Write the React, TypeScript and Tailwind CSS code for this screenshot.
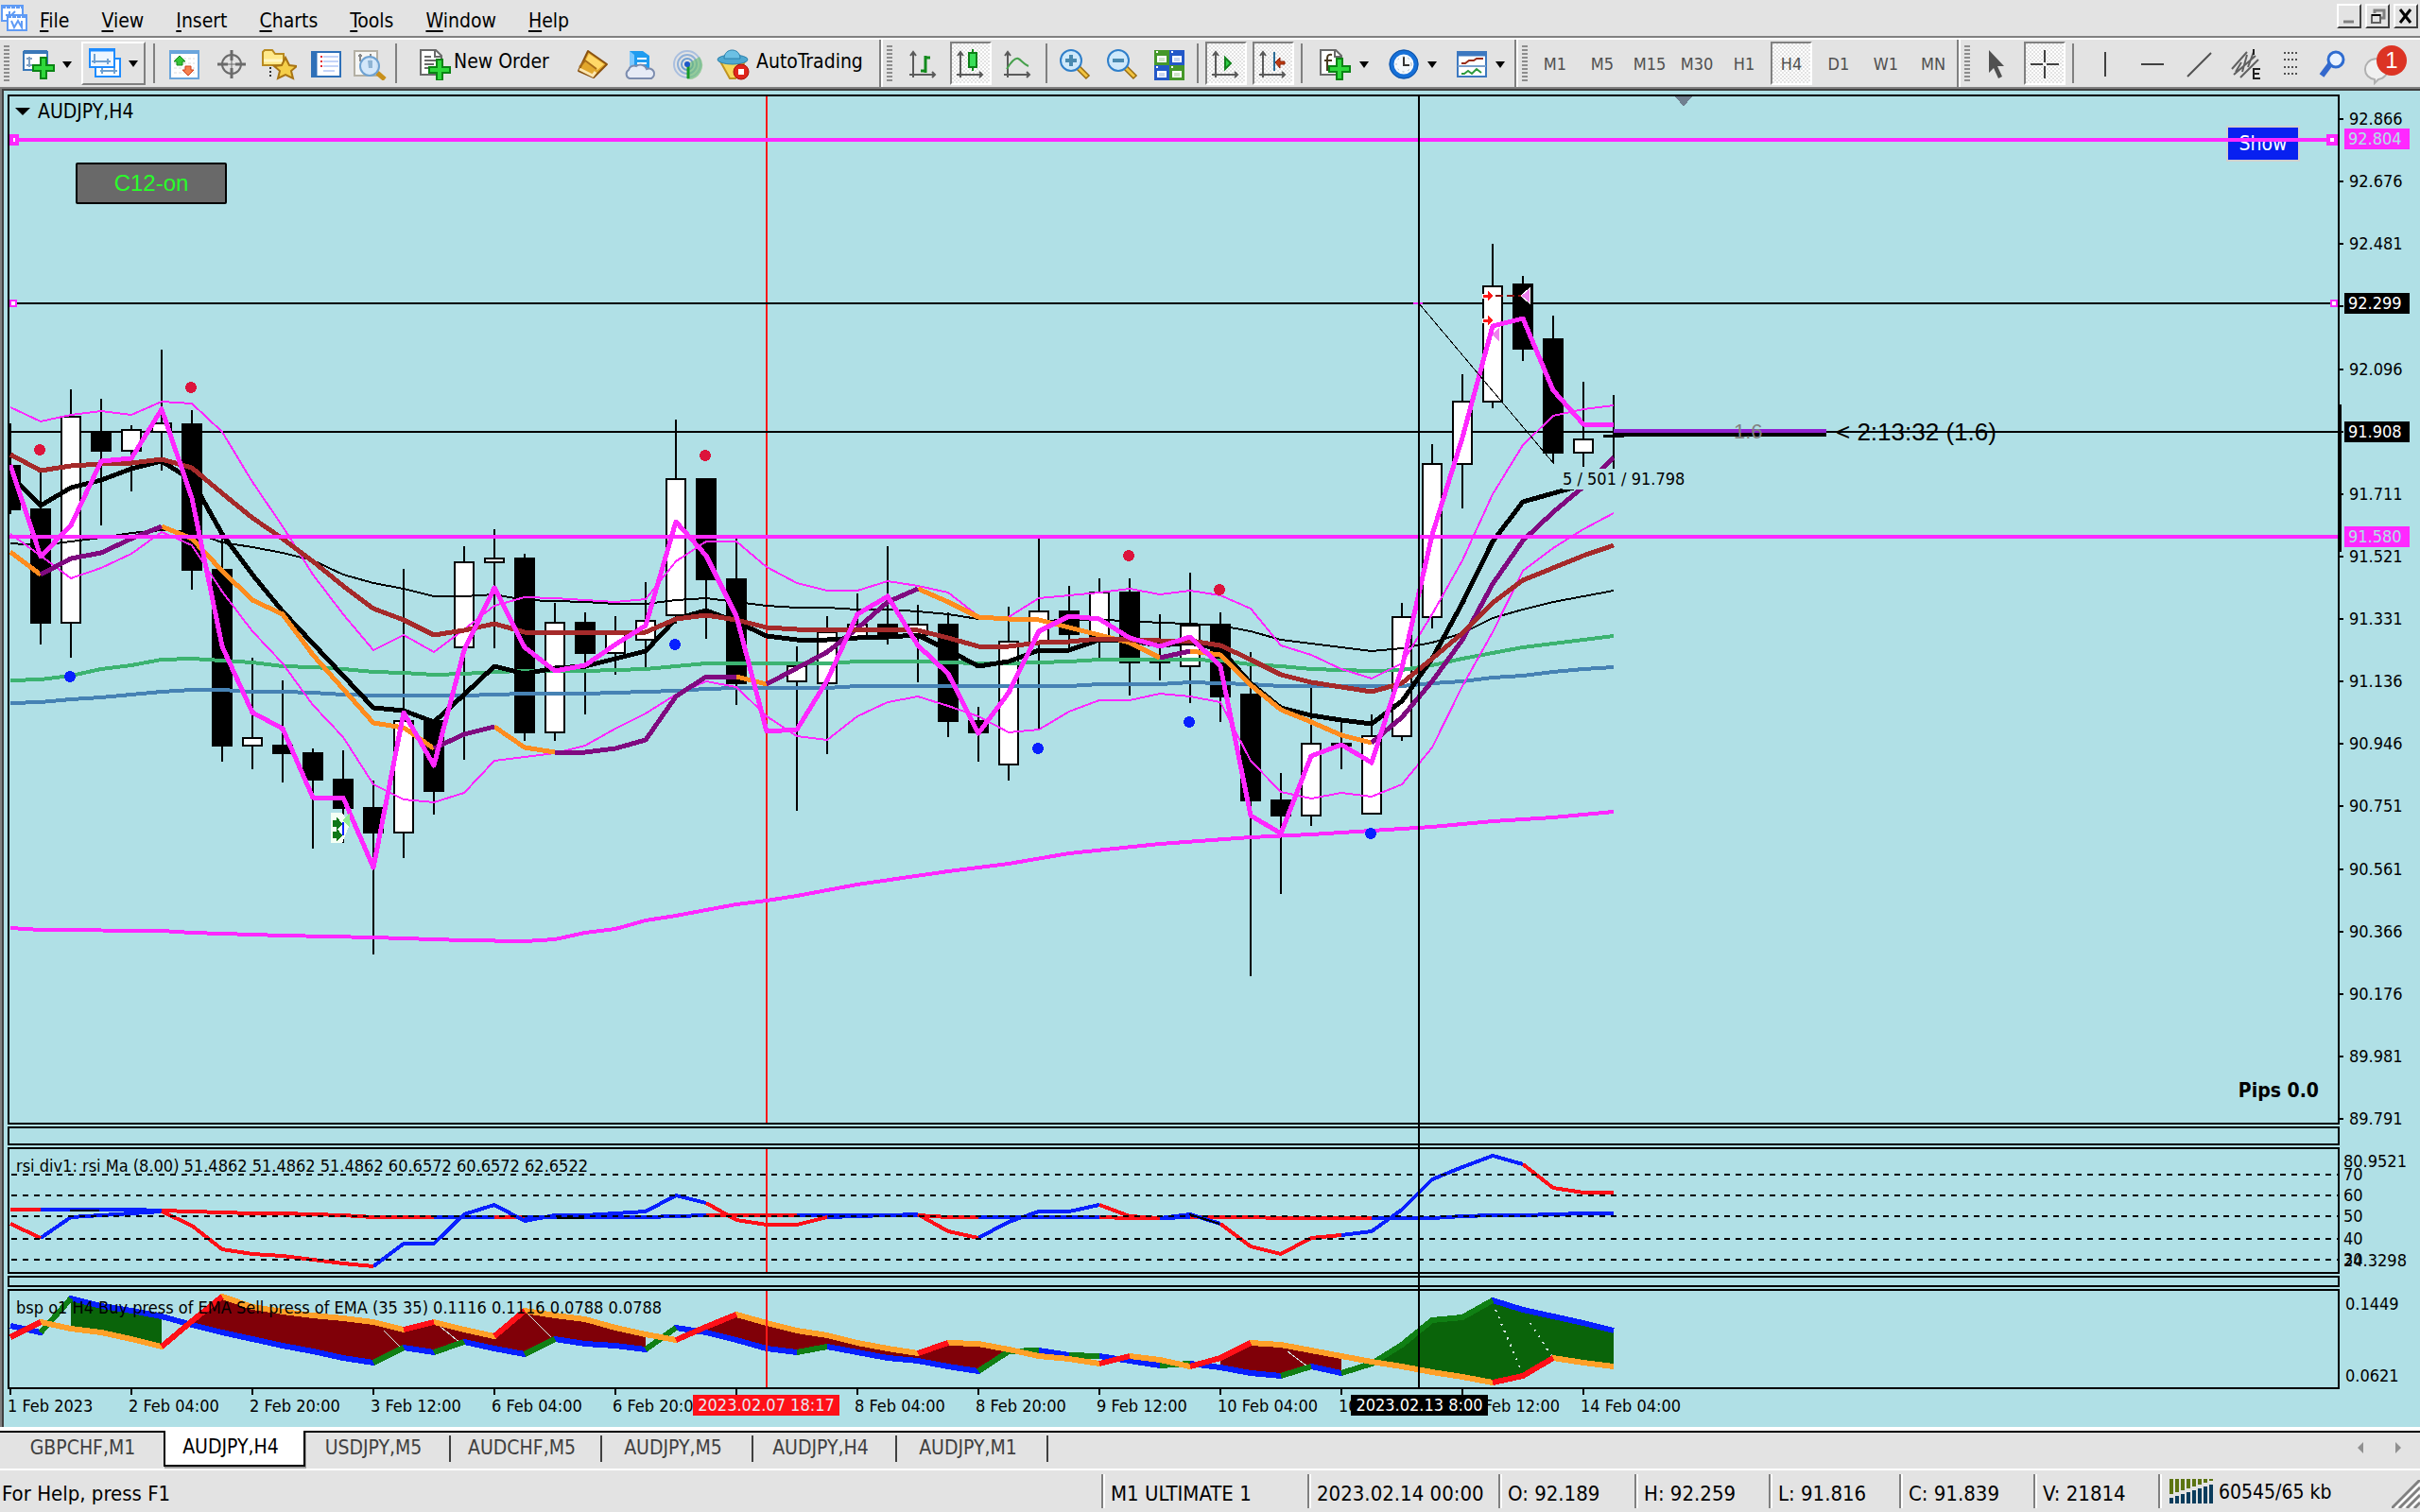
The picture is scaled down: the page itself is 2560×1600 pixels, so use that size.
import React from "react";

/* ---------- market data (chart pixel space, one bar every 32px) ---------- */

const X0 = 11;
const STEP = 32;
const bx = (i: number) => X0 + i * STEP;

type Bar = [number, number, number, number, number, 0 | 1];
// index, high, body top, body bottom, low, bullish
const BARS: Bar[] = [
  [0, 448, 492, 540, 544, 0], [1, 498, 538, 660, 682, 0], [2, 412, 441, 659, 696, 1], [3, 422, 456, 478, 556, 0],
  [4, 450, 455, 477, 520, 1], [5, 370, 448, 457, 498, 1], [6, 434, 448, 604, 624, 0], [7, 570, 602, 790, 806, 0],
  [8, 696, 781, 789, 814, 1], [9, 720, 788, 798, 828, 0], [10, 792, 796, 826, 898, 0], [11, 794, 824, 856, 892, 0],
  [12, 826, 854, 882, 1010, 0], [13, 602, 763, 881, 908, 1], [14, 762, 762, 838, 862, 0], [15, 578, 595, 685, 804, 1],
  [16, 560, 591, 595, 686, 1], [17, 586, 590, 776, 784, 0], [18, 638, 659, 775, 784, 1], [19, 648, 658, 692, 756, 0],
  [20, 652, 669, 691, 714, 1], [21, 616, 657, 677, 706, 1], [22, 444, 507, 651, 660, 1], [23, 506, 506, 614, 676, 0],
  [24, 570, 612, 724, 746, 0], [26, 684, 705, 721, 858, 1], [27, 652, 669, 723, 798, 1], [28, 628, 661, 675, 676, 1],
  [29, 578, 660, 673, 682, 0], [30, 640, 661, 672, 722, 1], [31, 648, 660, 764, 780, 0], [32, 748, 762, 776, 806, 0],
  [33, 642, 679, 809, 826, 1], [34, 570, 647, 680, 772, 1], [35, 620, 646, 672, 686, 0], [36, 612, 627, 673, 696, 1],
  [37, 612, 626, 702, 736, 0], [38, 650, 700, 702, 720, 0], [39, 606, 662, 705, 744, 1], [40, 648, 660, 738, 764, 0],
  [41, 690, 734, 848, 1033, 0], [42, 818, 846, 864, 946, 0], [43, 727, 787, 863, 874, 1], [44, 763, 786, 790, 814, 0],
  [45, 756, 779, 861, 861, 1], [46, 638, 653, 779, 784, 1], [47, 470, 491, 653, 665, 1], [48, 396, 425, 491, 538, 1],
  [49, 258, 303, 425, 432, 1], [50, 292, 300, 370, 382, 0], [51, 334, 358, 480, 490, 0], [52, 404, 465, 479, 494, 1],
  [53, 418, 460, 463, 500, 0],
];

const FAST = [492, 589, 556, 488, 485, 433, 527, 684, 754, 771, 844, 844, 918, 754, 810, 688, 622, 685, 710, 704, 682, 662, 552, 588, 652, 774, 772, 720, 650, 631, 683, 713, 776, 733, 668, 652, 655, 675, 684, 674, 705, 863, 882, 800, 788, 807, 707, 566, 463, 345, 337, 413, 449, 450];
const BAND_UP = [431, 446, 439, 435, 439, 425, 427, 457, 510, 557, 608, 650, 688, 672, 690, 666, 641, 632, 633, 635, 637, 634, 594, 573, 573, 600, 617, 625, 625, 615, 620, 627, 652, 653, 633, 630, 627, 623, 629, 625, 630, 644, 683, 693, 708, 718, 702, 650, 593, 523, 471, 440, 433, 429];
const BAND_LOW = [565, 588, 612, 601, 586, 563, 577, 626, 668, 702, 746, 780, 830, 846, 849, 839, 805, 801, 797, 789, 771, 755, 735, 721, 727, 758, 779, 783, 758, 743, 737, 747, 758, 775, 772, 753, 741, 741, 734, 737, 743, 805, 838, 845, 839, 843, 830, 791, 726, 669, 604, 580, 560, 543];
const SLOW_BLACK = [575, 577, 573, 569, 564, 561, 563, 574, 579, 585, 593, 608, 617, 623, 631, 631, 629, 635, 636, 637, 639, 639, 635, 633, 637, 641, 643, 643, 645, 645, 647, 650, 655, 656, 657, 656, 656, 657, 659, 660, 662, 668, 677, 681, 685, 689, 686, 680, 670, 654, 645, 637, 631, 625];
const MID_BLACK = [503, 535, 516, 508, 496, 488, 508, 565, 608, 647, 681, 715, 749, 752, 764, 735, 705, 713, 707, 705, 697, 689, 655, 646, 658, 673, 677, 677, 675, 674, 672, 688, 705, 700, 688, 688, 677, 678, 683, 680, 687, 723, 749, 757, 762, 766, 742, 697, 638, 573, 531, 522, 513, 505];
const TREND = [584, 608, 591, 585, 570, 557, 570, 604, 635, 650, 693, 729, 765, 770, 792, 777, 769, 791, 796, 796, 792, 783, 737, 716, 716, 724, 707, 690, 665, 637, 623, 637, 653, 655, 656, 664, 672, 680, 696, 689, 693, 725, 751, 764, 778, 786, 759, 721, 677, 618, 572, 542, 515, 484];
const TREND_UP: [number, number][] = [[1, 5], [14, 16], [18, 24], [25, 30], [38, 39], [45, 53]];
const TREND_DOWN: [number, number][] = [[0, 1], [5, 14], [16, 18], [24, 25], [30, 38], [39, 45]];
const BROWN = [481, 498, 493, 491, 490, 486, 495, 522, 548, 570, 594, 620, 644, 656, 672, 667, 660, 669, 669, 669, 669, 669, 655, 651, 656, 664, 666, 666, 666, 666, 667, 675, 684, 684, 680, 679, 676, 677, 678, 678, 683, 698, 714, 722, 727, 732, 723, 697, 670, 638, 614, 601, 588, 577];
const GREEN = [720, 719, 715, 708, 704, 698, 697, 699, 701, 705, 706, 708, 711, 712, 714, 713, 711, 710, 710, 710, 709, 708, 705, 702, 702, 702, 702, 702, 700, 700, 700, 701, 702, 702, 701, 700, 698, 698, 698, 698, 699, 703, 705, 708, 709, 710, 709, 704, 697, 691, 685, 681, 677, 673];
const BLUE = [744, 743, 740, 738, 735, 732, 730, 730, 732, 732, 733, 735, 736, 736, 736, 736, 735, 734, 734, 734, 733, 732, 731, 729, 728, 728, 728, 728, 726, 726, 726, 726, 726, 726, 726, 726, 724, 724, 724, 722, 723, 724, 726, 726, 726, 726, 726, 723, 721, 717, 715, 711, 708, 706];
const LONG: [number, number][] = [[0, 982], [1, 984], [5, 985], [6, 987], [9, 990], [12, 992], [15, 995], [17, 996], [18, 994], [19, 987], [20, 983], [21, 974], [22, 969], [23, 963], [24, 957], [25, 953], [26, 948], [28, 936], [31, 922], [33, 914], [35, 903], [38, 893], [41, 886], [43, 883], [45, 879], [47, 875], [49, 869], [51, 865], [53, 859]];

const SELL_DOTS: [number, number][] = [[1, 476], [6, 410], [23, 482], [37, 588], [40, 624]];
const BUY_DOTS: [number, number][] = [[2, 716], [22, 682], [34, 792], [39, 764], [45, 882]];

const RSI = [1295, 1310, 1288, 1286, 1284, 1282, 1297, 1322, 1327, 1329, 1333, 1337, 1340, 1316, 1316, 1285, 1275, 1292, 1286, 1286, 1284, 1282, 1265, 1273, 1291, 1296, 1296, 1288, 1287, 1286, 1285, 1303, 1310, 1293, 1282, 1282, 1275, 1287, 1289, 1285, 1295, 1319, 1327, 1310, 1307, 1303, 1280, 1248, 1235, 1223, 1232, 1257, 1262, 1262];
const RSI_UP: [number, number][] = [[1, 5], [12, 23], [27, 30], [32, 36], [38, 40], [44, 50]];
const RSI_DOWN: [number, number][] = [[0, 1], [5, 12], [23, 27], [30, 32], [36, 38], [40, 44], [50, 53]];
const SIG = [1280, 1280, 1280, 1280, 1280, 1281, 1282, 1283, 1284, 1284, 1285, 1286, 1288, 1288, 1288, 1288, 1288, 1288, 1288, 1288, 1288, 1288, 1287, 1286, 1286, 1286, 1286, 1286, 1286, 1286, 1286, 1288, 1288, 1288, 1288, 1288, 1288, 1289, 1289, 1288, 1288, 1288, 1289, 1289, 1289, 1289, 1289, 1289, 1287, 1286, 1286, 1285, 1284, 1284];
const SIG_UP: [number, number][] = [[1, 5], [14, 16], [17, 23], [26, 30], [32, 36], [38, 39], [45, 53]];
const SIG_DOWN: [number, number][] = [[0, 1], [5, 14], [16, 17], [23, 26], [30, 32], [36, 38], [39, 45]];

const BUYP = [1403, 1410, 1374, 1382, 1387, 1393, 1402, 1410, 1417, 1424, 1430, 1437, 1442, 1426, 1431, 1420, 1427, 1433, 1417, 1422, 1424, 1428, 1405, 1410, 1418, 1427, 1431, 1425, 1431, 1437, 1440, 1446, 1451, 1430, 1429, 1434, 1435, 1440, 1445, 1443, 1447, 1453, 1456, 1446, 1453, 1443, 1423, 1397, 1394, 1376, 1386, 1393, 1400, 1408];
const BUYP_UP: [number, number][] = [[1, 2], [12, 13], [14, 15], [17, 18], [21, 22], [26, 27], [32, 34], [35, 36], [38, 39], [42, 43], [44, 49]];
const SELLP = [1415, 1399, 1406, 1410, 1417, 1425, 1398, 1372, 1383, 1388, 1392, 1395, 1399, 1407, 1399, 1407, 1414, 1387, 1392, 1396, 1405, 1412, 1418, 1404, 1391, 1400, 1408, 1413, 1421, 1427, 1432, 1421, 1422, 1428, 1435, 1438, 1443, 1435, 1439, 1446, 1437, 1421, 1423, 1429, 1435, 1441, 1446, 1452, 1457, 1463, 1456, 1437, 1442, 1446];
const SELLP_UP: [number, number][] = [[0, 1], [5, 7], [13, 14], [16, 17], [22, 24], [30, 31], [36, 37], [39, 41], [49, 51]];

const PRICES = ["92.866", "92.676", "92.481", "92.299", "92.096", "91.908", "91.711", "91.521", "91.331", "91.136", "90.946", "90.751", "90.561", "90.366", "90.176", "89.981", "89.791"];
// the seventh slot is fully covered by the vertical line's time tag
const TIMES = ["1 Feb 2023", "2 Feb 04:00", "2 Feb 20:00", "3 Feb 12:00", "6 Feb 04:00", "6 Feb 20:00", "", "8 Feb 04:00", "8 Feb 20:00", "9 Feb 12:00", "10 Feb 04:00", "10 Feb 20:00", "13 Feb 12:00", "14 Feb 04:00"];

const pts = (s: number[], a = 0, b = s.length - 1) =>
  s.slice(a, b + 1).map((y, k) => `${bx(a + k)},${y}`).join(" ");

function Line({ s, a, b, c, w }: { s: number[]; a?: number; b?: number; c: string; w: number }) {
  return <polyline points={pts(s, a, b)} fill="none" stroke={c} strokeWidth={w} strokeLinejoin="round" />;
}
function Runs({ s, r, c, w }: { s: number[]; r: [number, number][]; c: string; w: number }) {
  return <>{r.map(([a, b]) => <Line key={a} s={s} a={a} b={b} c={c} w={w} />)}</>;
}
function Fill({ a, b, c }: { a: number; b: number; c: string }) {
  const back = BUYP.slice(a, b + 1).map((y, k) => `${bx(a + k)},${y}`).reverse().join(" ");
  return <polygon points={pts(SELLP, a, b) + " " + back} fill={c} />;
}

function Plot({ top, children }: { top: number; children?: React.ReactNode }) {
  return (
    <svg className="absolute inset-0 h-full w-full" shapeRendering="crispEdges" aria-hidden="true">
      <g transform={`translate(-10 ${-top})`}>{children}</g>
    </svg>
  );
}

/* ---------- icons ---------- */

function Ico({ children, w = 34 }: { children: React.ReactNode; w?: number }) {
  return (
    <svg width={w} height="34" viewBox={`0 0 ${w} 34`} className="shrink-0" aria-hidden="true">
      {children}
    </svg>
  );
}
const Plus = ({ x, y }: { x: number; y: number }) => (
  <path transform={`translate(${x} ${y})`} d="M8 1h6v8h8v6h-8v8h-6v-8h-8v-6h8z" fill="#2fd83a" stroke="#0a8414" strokeWidth="2" />
);
const Caret = () => (
  <svg width="10" height="7" viewBox="0 0 10 7" className="shrink-0" aria-hidden="true"><path d="M0 0h10L5 7z" fill="#000" /></svg>
);
const Axes = () => (
  <g stroke="#5a5a5a" strokeWidth="2" fill="none">
    <path d="M6 5v26M2 28h27" />
    <path d="M3 8l3-4 3 4M26 25l3 3-3 3" />
  </g>
);
const AppIcon = () => (
  <svg width="30" height="30" viewBox="0 0 30 30" aria-hidden="true">
    <rect x="2" y="2" width="22" height="16" fill="#fff" stroke="#5f9bf5" strokeWidth="2" />
    <path d="M2 3h22" stroke="#5f9bf5" strokeWidth="4" strokeDasharray="4 1" />
    <path d="M6 12h4V8M12 12l4-4" stroke="#5f9bf5" strokeWidth="2" fill="none" />
    <rect x="8" y="12" width="20" height="16" fill="#fff" stroke="#5f9bf5" strokeWidth="2" />
    <path d="M8 13h20" stroke="#5f9bf5" strokeWidth="4" strokeDasharray="4 1" />
    <path d="M12 18l3 7 4-7 4 7v-7" stroke="#5f9bf5" strokeWidth="2" fill="none" />
  </svg>
);
const NewChart = () => (
  <Ico><rect x="1" y="4" width="25" height="19" fill="#fff" stroke="#3a78b8" strokeWidth="2" /><path d="M1 4h25" stroke="#3a78b8" strokeWidth="4" /><path d="M7 9v11M4 11h6M4 18h12" stroke="#7fa0c4" strokeWidth="2" /><Plus x={11} y={9} /></Ico>
);
const Profiles = () => (
  <Ico><rect x="7" y="12" width="26" height="19" fill="#fff" stroke="#1e8cff" strokeWidth="2" /><path d="M12 25h18M14 22v6M27 22v6" stroke="#6fa0d0" strokeWidth="2" /><rect x="1" y="2" width="26" height="19" fill="#eef6ff" stroke="#1e8cff" strokeWidth="2" /><path d="M1 3h26" stroke="#1e8cff" strokeWidth="3" /><path d="M6 7v10M3 15h20M20 12v6" stroke="#6fa0d0" strokeWidth="2" fill="none" /></Ico>
);
const MarketWatch = () => (
  <Ico><rect x="2" y="3" width="30" height="29" fill="#fff" stroke="#6aa5dc" strokeWidth="2" /><path d="M2 4h30" stroke="#6aa5dc" strokeWidth="4" /><path d="M6 11h22M6 16h22M6 21h22M6 26h22" stroke="#dadada" strokeDasharray="3 2" /><path d="M12 8l6 6h-3v4h-6v-4H6z" fill="#36c436" stroke="#158a1a" /><path d="M21 29l-6-6h3v-4h6v4h3z" fill="#f5804e" stroke="#d2401a" /></Ico>
);
const Target = () => (
  <Ico><g stroke="#6a6a6a" fill="none" strokeWidth="2"><circle cx="17" cy="17" r="10" /><path strokeWidth="3" d="M17 2v11M17 21v11M2 17h11M21 17h11" /><path d="M17 13v8M13 17h8" strokeWidth="1" /></g></Ico>
);
const FolderStar = () => (
  <Ico w={38}><path d="M2 18V4l2-2h8l3 4h9v12z" fill="#ffe98a" stroke="#b98a20" strokeWidth="2" /><path d="M3 13h20" stroke="#fff6c4" strokeWidth="3" /><path d="M10 20v12" stroke="#333" strokeWidth="2" strokeDasharray="2 2" /><path d="M26 10l4 8 8 1-6 5 2 8-8-4-8 4 2-8-6-5 8-1z" fill="#f5cf4a" stroke="#a87414" strokeWidth="2" /></Ico>
);
const Navigator = () => (
  <Ico><rect x="2" y="4" width="30" height="26" fill="#fff" stroke="#2e70b8" strokeWidth="2" /><path d="M5 5v24" stroke="#2e70b8" strokeWidth="5" /><path d="M14 9h16M14 14h16M14 19h16M14 24h12" stroke="#c4d4f8" strokeWidth="2" /><path d="M12 8v14" stroke="#e02030" strokeWidth="2" strokeDasharray="2 3" /></Ico>
);
const Tester = () => (
  <Ico w={36}><rect x="1" y="3" width="24" height="26" fill="#f6f6f4" stroke="#b4b0a4" strokeWidth="2" /><path d="M7 6v8M5 8h4M18 6v8M16 10h4" stroke="#888" strokeWidth="2" /><path d="M25 26l8 7" stroke="#c8901c" strokeWidth="5" /><circle cx="17" cy="19" r="10" fill="#cfe6fb" fillOpacity=".9" stroke="#6ea2d2" strokeWidth="2" /><path d="M15 13h5v8h-4z" fill="#8fb4d4" /></Ico>
);
const Doc = () => (
  <><path d="M1 2h16l6 6v20H1z" fill="#fff" stroke="#6a6a6a" strokeWidth="2" /><path d="M16 2v7h7" fill="none" stroke="#6a6a6a" strokeWidth="2" /></>
);
const NewOrder = () => (
  <Ico><Doc /><path d="M5 9h7M5 13h12M5 17h10M5 21h5" stroke="#6a6a6a" strokeWidth="2" /><Plus x={10} y={11} /></Ico>
);
const Book = () => (
  <Ico><path d="M12 3L32 17 18 31 2 24z" fill="#e2a72c" stroke="#8a5210" strokeWidth="2" strokeLinejoin="round" /><path d="M13 6l16 11-7 6L9 14z" fill="#ffd868" /><path d="M3 22l14 7 3-4" fill="none" stroke="#fbe6b0" strokeWidth="3" /><path d="M3 20l6-7 12 9" fill="none" stroke="#a86c18" strokeWidth="2" /></Ico>
);
const Cloud = () => (
  <Ico><path d="M6 3h14l7 5v16H6z" fill="#1f9cf0" /><path d="M6 3l5 4v16H6z" fill="#7cc8ff" /><path d="M14 11h10M14 16h10" stroke="#fff" strokeWidth="2" /><path d="M6 32a5 5 0 0 1-1-9 6 6 0 0 1 8-4 7 7 0 0 1 11 3 5 5 0 0 1 5 10z" fill="#e6ebf6" stroke="#7c8cae" strokeWidth="2" /></Ico>
);
const Signal = () => (
  <Ico><g fill="none" strokeWidth="2"><circle cx="17" cy="17" r="14" stroke="#aabfdf" /><circle cx="17" cy="17" r="10" stroke="#8fb0d8" /><circle cx="17" cy="17" r="6" stroke="#6f9ed0" /></g><path d="M17 17L30 9a15 15 0 0 1-13 24z" fill="#6cbf74" fillOpacity=".65" /><path d="M18 17v15" stroke="#189a28" strokeWidth="3" /><circle cx="17" cy="17" r="3" fill="#1e58c8" /></Ico>
);
const AutoTrade = () => (
  <Ico w={36}><path d="M4 14h26l-10 18h-6z" fill="#f6d85a" stroke="#c09420" strokeWidth="2" /><ellipse cx="17" cy="12" rx="16" ry="5" fill="#4fa8d0" stroke="#2a80ac" /><path d="M8 11c0-12 17-12 17 0z" fill="#6cc0e4" stroke="#2a80ac" /><circle cx="26" cy="25" r="8" fill="#e0261c" stroke="#a81208" /><rect x="23" y="22" width="6" height="6" fill="#fff" /></Ico>
);
const BarChart = () => <Ico><Axes /><path d="M19 8v18M19 10h5M14 24h5" stroke="#128a1c" strokeWidth="3" /></Ico>;
const CandleChart = () => <Ico><Axes /><path d="M19 1v23" stroke="#128a1c" strokeWidth="2" /><rect x="15" y="5" width="8" height="15" fill="#3ade58" stroke="#0d8018" strokeWidth="2" /></Ico>;
const LineChart = () => <Ico><Axes /><path d="M5 22c5-8 9-12 12-11s6 6 11 8" stroke="#46a04c" strokeWidth="2" fill="none" /></Ico>;
const Lens = ({ minus }: { minus?: boolean }) => (
  <Ico><path d="M20 20l11 11" stroke="#9a6c10" strokeWidth="6" /><path d="M21 21l9 9" stroke="#f2c440" strokeWidth="3" /><circle cx="13" cy="13" r="11" fill="#cfe9fb" stroke="#2f7fca" strokeWidth="2" /><path d={minus ? "M7 13h12" : "M7 13h12M13 7v12"} stroke="#4a8ab0" strokeWidth="4" /></Ico>
);
const Tile = () => (
  <Ico>
    {[[1, 2, "#45982a"], [17, 2, "#2358c8"], [1, 18, "#2358c8"], [17, 18, "#45982a"]].map(([x, y, c]) => (
      <g key={`${x}-${y}`} transform={`translate(${x} ${y})`}>
        <rect width="16" height="16" fill={c as string} /><path d="M2 2h2" stroke="#fff" strokeWidth="2" /><rect x="3" y="6" width="10" height="7" fill="#fff" /><path d="M5 9h6M5 11h6" stroke={c as string} strokeOpacity=".5" />
      </g>
    ))}
  </Ico>
);
const Scroll = () => <Ico><Axes /><path d="M16 10l6 6-6 6z" fill="#2fd048" stroke="#12801c" strokeWidth="2" /></Ico>;
const Shift = () => <Ico><Axes /><path d="M18 4v20" stroke="#2a6c96" strokeWidth="2" /><path d="M19 15l5-5v4h5v3h-5v4z" fill="#c03c10" stroke="#8a2006" /></Ico>;
const Indicators = () => (
  <Ico><Doc /><path d="M13 7c-5-1-5 2-5 5v12M5 13h8" stroke="#4a3a20" strokeWidth="2" fill="none" /><Plus x={10} y={10} /></Ico>
);
const Clock = () => (
  <Ico><circle cx="17" cy="17" r="13" fill="#f4f8fc" stroke="#1670d8" strokeWidth="5" /><circle cx="17" cy="17" r="15" fill="none" stroke="#1050a0" /><path d="M17 9v9h6" stroke="#333" strokeWidth="2" fill="none" /><circle cx="17" cy="17" r="8" fill="none" stroke="#aab4c0" strokeDasharray="2 4" /></Ico>
);
const Template = () => (
  <Ico><rect x="2" y="4" width="30" height="26" fill="#fff" stroke="#3c78c0" strokeWidth="2" /><path d="M2 6h30" stroke="#3c78c0" strokeWidth="5" /><path d="M2 19h30" stroke="#7ba0cc" strokeWidth="2" /><path d="M6 16h4l4-3h5l3-2h7" stroke="#982c18" strokeWidth="2" fill="none" /><path d="M6 27h3l4-3 4 3 5-5 5 4" stroke="#2c9a3c" strokeWidth="2" fill="none" /></Ico>
);

/* ---------- chrome ---------- */

const Sep = () => <div className="mx-1 h-[42px] w-0.5 shrink-0 bg-[#808080]" />;
const Grip = () => (
  <div className="h-[38px] w-1.5 shrink-0 bg-[repeating-linear-gradient(to_bottom,#8c8c8c_0_2px,#e3e3e3_2px_4px)]" />
);
const GroupEnd = () => <div className="h-full w-1 shrink-0 border-l-2 border-[#808080] bg-white" />;

function Tool({ label, children, caret, narrow }: { label: string; children: React.ReactNode; caret?: boolean; narrow?: boolean }) {
  const width = caret ? "w-[72px] gap-2" : narrow ? "w-11" : "w-[50px]";
  return (
    <button type="button" aria-label={label} className={"flex h-[46px] shrink-0 items-center justify-center pt-0.5 " + width}>
      {children}
      {caret && <Caret />}
    </button>
  );
}
function Pressed({ label, children }: { label: string; children: React.ReactNode }) {
  return (
    <button type="button" aria-label={label} aria-pressed="true" className="mx-[3px] flex h-[46px] w-11 shrink-0 items-center justify-center border-2 border-b-white border-l-[#808080] border-r-white border-t-[#808080] bg-[repeating-conic-gradient(#ffffff_0_25%,#e3e3e3_0_50%)] bg-[length:4px_4px] pt-0.5 text-[#505050]">
      {children}
    </button>
  );
}
function PriceTag({ top, tone, children }: { top: string; tone: string; children: React.ReactNode }) {
  return <div className={`absolute left-[5px] h-[22px] w-[69px] pl-1 leading-[22px] ${top} ${tone}`}>{children}</div>;
}

const CHART_FONT = "font-['DejaVu_Sans_Condensed','DejaVu_Sans',sans-serif]";
const TABS: [string, string][] = [["GBPCHF,M1", "w-[163px]"], ["AUDJPY,H4", "w-[150px]"], ["USDJPY,M5", "w-[154px]"], ["AUDCHF,M5", "w-40"], ["AUDJPY,M5", "w-40"], ["AUDJPY,H4", "w-[152px]"], ["AUDJPY,M1", "w-40"]];
const CELLS: [string, string][] = [["M1 ULTIMATE 1", "w-[218px]"], ["2023.02.14 00:00", "w-[202px]"], ["O: 92.189", "w-36"], ["H: 92.259", "w-[142px]"], ["L: 91.816", "w-[138px]"], ["C: 91.839", "w-[142px]"], ["V: 21814", "w-[132px]"]];

function MenuBar() {
  return (
    <header className="flex h-[42px] shrink-0 items-start border-b-2 border-white">
      <div className="flex h-10 w-full items-start border-b-2 border-[#808080] pr-0.5">
        <div className="w-8 shrink-0 pt-1"><AppIcon /></div>
        <nav className="flex flex-1 items-center gap-[34px] pl-2.5 pt-2 text-[21px]">
          {["File", "View", "Insert", "Charts", "Tools", "Window", "Help"].map((m) => (
            <button type="button" key={m} className="leading-7">
              <span className="underline decoration-2 underline-offset-[3px]">{m[0]}</span>{m.slice(1)}
            </button>
          ))}
        </nav>
        <div className="flex gap-1 pt-1">
          {["Minimize", "Restore", "Close"].map((n) => (
            <button type="button" key={n} aria-label={n} className="flex h-[26px] w-[26px] items-center justify-center border-2 border-b-[#404040] border-l-white border-r-[#404040] border-t-white bg-[#e3e3e3]">
              <svg width="18" height="18" viewBox="0 0 18 18" fill="none" aria-hidden="true">
                {n === "Minimize" && <path d="M3 15h11" stroke="#808080" strokeWidth="3" />}
                {n === "Restore" && <><path d="M6 6V3h10v8h-3" stroke="#808080" strokeWidth="3" /><rect x="3" y="8" width="9" height="8" stroke="#606060" strokeWidth="2" /><path d="M3 8h9" stroke="#000" strokeWidth="2" /></>}
                {n === "Close" && <path d="M3 2l11 14M14 2L3 16" stroke="#000" strokeWidth="3" />}
              </svg>
            </button>
          ))}
        </div>
      </div>
    </header>
  );
}

function Toolbar() {
  return (
    <div className="flex h-[50px] shrink-0 items-center overflow-hidden pl-1 text-[21px]">
      <Grip />
      <div className="w-1" />
      <Tool label="New chart" caret><NewChart /></Tool>
      <button type="button" aria-label="Profiles" className="flex h-[46px] w-[68px] shrink-0 items-center justify-center gap-2 border-2 border-b-[#808080] border-l-white border-r-[#808080] border-t-white">
        <Profiles /><Caret />
      </button>
      <div className="w-1" /><Sep />
      <div className="w-0.5" />
      <Tool label="Market Watch"><MarketWatch /></Tool>
      <Tool label="Data Window"><Target /></Tool>
      <Tool label="Favorites"><FolderStar /></Tool>
      <Tool label="Navigator"><Navigator /></Tool>
      <Tool label="Strategy Tester" narrow><Tester /></Tool>
      <Sep />
      <button type="button" className="ml-5 mr-2 flex h-[46px] w-[150px] shrink-0 items-center gap-0.5 whitespace-nowrap pt-0.5"><NewOrder /><span className="pb-1">New Order</span></button>
      <Tool label="MetaEditor"><Book /></Tool>
      <Tool label="Virtual hosting"><Cloud /></Tool>
      <Tool label="Signals"><Signal /></Tool>
      <button type="button" className="ml-1.5 mr-1.5 flex h-[46px] w-[166px] shrink-0 items-center gap-1.5 whitespace-nowrap pt-0.5"><AutoTrade /><span className="pb-1">AutoTrading</span></button>
      <GroupEnd />
      <div className="w-1" /><Grip />
      <div className="w-2" />
      <Tool label="Bar chart"><BarChart /></Tool>
      <Pressed label="Candlesticks"><CandleChart /></Pressed>
      <Tool label="Line chart"><LineChart /></Tool>
      <Sep />
      <Tool label="Zoom in"><Lens /></Tool>
      <Tool label="Zoom out"><Lens minus /></Tool>
      <Tool label="Tile windows"><Tile /></Tool>
      <Sep />
      <Pressed label="Auto scroll"><Scroll /></Pressed>
      <Pressed label="Chart shift"><Shift /></Pressed>
      <Sep />
      <div className="w-1" />
      <Tool label="Indicators" caret><Indicators /></Tool>
      <Tool label="Periods" caret><Clock /></Tool>
      <Tool label="Templates" caret><Template /></Tool>
      <GroupEnd />
      <div className="w-1" /><Grip />
      <div className="flex items-center pl-1 text-lg text-[#505050]">
        {["M1", "M5", "M15", "M30", "H1", "H4", "D1", "W1", "MN"].map((p) =>
          p === "H4" ? <Pressed key={p} label="H4">H4</Pressed> : <button type="button" key={p} className="h-[46px] w-[50px] shrink-0 pt-0.5">{p}</button>
        )}
      </div>
      <GroupEnd />
      <div className="w-1" /><Grip />
      <div className="w-1" />
      <Tool label="Cursor"><Ico><path d="M8 2l16 17h-7l5 11-4 2-5-11-5 5z" fill="#505050" /></Ico></Tool>
      <Pressed label="Crosshair"><Ico><path d="M17 2v13M17 19v13M2 17h13M19 17h13" stroke="#404040" strokeWidth="2" /></Ico></Pressed>
      <Sep />
      <div className="w-1" />
      <Tool label="Vertical line"><Ico><path d="M17 4v26" stroke="#404040" strokeWidth="2" /></Ico></Tool>
      <Tool label="Horizontal line"><Ico><path d="M5 17h24" stroke="#404040" strokeWidth="2" /></Ico></Tool>
      <Tool label="Trendline"><Ico><path d="M4 30L29 5" stroke="#505050" strokeWidth="2" /></Ico></Tool>
      <Tool label="Equidistant channel"><Ico><path d="M1 22L17 4M3 28L26 8M10 31L29 12M5 25l6-10M12 25l5-18M18 20l6-16" stroke="#606060" strokeWidth="2" /><path d="M31 22h-7v10h7M24 27h6M24 1v6" stroke="#202020" strokeWidth="2" fill="none" /></Ico></Tool>
      <Tool label="Fibonacci" narrow><Ico><path d="M9 5h16M9 12h16M9 20h16M9 27h16" stroke="#505050" strokeWidth="2" strokeDasharray="2 2" /></Ico></Tool>
      <Tool label="Search" narrow><Ico><path d="M14 17L5 29" stroke="#3468cc" strokeWidth="6" /><circle cx="20" cy="12" r="8" fill="#eaf3ff" stroke="#2f6cd0" strokeWidth="3" /></Ico></Tool>
      <button type="button" aria-label="Messages" className="relative ml-1.5 h-[46px] w-[54px] shrink-0">
        <svg width="54" height="46" viewBox="0 0 54 46" aria-hidden="true"><path d="M6 30a12 11 0 1 1 14 10l-4 4v-4C10 39 6 35 6 30z" fill="#f0f0f0" stroke="#b0b0b0" strokeWidth="2" /><circle cx="34" cy="20" r="16" fill="#dc3424" /></svg>
        <span className="absolute left-[18px] top-1 w-8 text-center font-['Liberation_Sans',sans-serif] text-2xl text-white">1</span>
      </button>
    </div>
  );
}

function MainPanel() {
  return (
    <div className="flex min-h-0 flex-1">
      <div className="relative min-w-0 flex-1 overflow-hidden border-2 border-black">
        <button type="button" className="absolute right-[40px] top-[31px] h-[38px] w-[78px] border-2 border-[#d0d0d0] bg-[#0820f0] text-[21px] leading-8 text-white">Show</button>
        <Plot top={102}>
          <path d="M811 100V1200" stroke="#ff1818" strokeWidth="2" />
          <path d="M0 457H4000M0 321H4000" stroke="#000" strokeWidth="2" />
          {BARS.map(([i, h, t, b, l, up]) => (
            <g key={i}>
              <path d={`M${bx(i)} ${h}V${l}`} stroke="#000" strokeWidth="2" />
              <rect x={bx(i) - (up ? 10 : 11)} y={t} width={up ? 20 : 22} height={Math.max(b - t, 2)} fill={up ? "#fff" : "#000"} stroke={up ? "#000" : "none"} strokeWidth="2" />
            </g>
          ))}
          <Line s={BLUE} c="#4682b4" w={4} />
          <Line s={GREEN} c="#3cb371" w={4} />
          <Line s={SLOW_BLACK} c="#000" w={2} />
          <Line s={BAND_UP} c="#ff28ff" w={2} />
          <Line s={BAND_LOW} c="#ff28ff" w={2} />
          <Line s={MID_BLACK} c="#000" w={5} />
          <Runs s={TREND} r={TREND_DOWN} c="#ff8c1e" w={5} />
          <Runs s={TREND} r={TREND_UP} c="#800a80" w={5} />
          <Line s={BROWN} c="#a52a2a" w={5} />
          <polyline points={LONG.map(([i, y]) => `${bx(i)},${y}`).join(" ")} fill="none" stroke="#ff28ff" strokeWidth="4" />
          <Line s={FAST} c="#ff28ff" w={5} />
          <path d="M0 148H4000M0 568H4000" stroke="#ff28ff" strokeWidth="4" />
          {SELL_DOTS.map(([i, y]) => <circle key={i} cx={bx(i) - 1} cy={y} r="6" fill="#dc143c" />)}
          {BUY_DOTS.map(([i, y]) => <circle key={i} cx={bx(i) - 1} cy={y} r="6" fill="#0820ff" />)}
          <path d="M350 860h12l8 12-8 20h-12z" fill="#f4fff4" />
          <path d="M352 868h4v-4l6 8-6 7v-4h-4zM352 880h4v-4l6 8-6 7v-4h-4z" fill="#107818" />
          <path d="M370 860v16l-7-8z" fill="#90ee90" />
          <path d="M363 870v14" stroke="#0820ff" strokeWidth="2" />
          <path d="M1582 313h28" stroke="#8b1010" strokeWidth="2" strokeDasharray="8 4" />
          {[313, 339].map((y) => <path key={y} d={`M1568 ${y - 2}h5v-5l7 7-7 7v-5h-5z`} fill="#ff1818" stroke="#fff" />)}
          <path d="M1618 305v16l-9-8z" fill="#ee82ee" stroke="#fff" />
          <path d="M1586 347v14l-8-7z" fill="#ee82ee" />
          <path d="M1501 321L1644 491" stroke="#000" strokeWidth="1" />
          <path d="M1495 321h10" stroke="#ff28ff" strokeWidth="2" />
          <path d="M1707 460H1932" stroke="#000" strokeWidth="4" />
          <path d="M1707 456H1932" stroke="#9020d0" strokeWidth="4" />
          <path d="M1772 102h18l-9 11z" fill="#708090" />
          <rect x="12" y="144" width="6" height="8" fill="#fff" stroke="#ff28ff" strokeWidth="4" />
          <rect x="11" y="318" width="6" height="6" fill="#fff" stroke="#ff28ff" strokeWidth="2" />
        </Plot>
        <div className="absolute right-0 top-[40px] h-3 w-3 border-4 border-[#ff28ff] bg-white" />
        <div className="absolute right-0 top-[215px] h-2 w-2 border-2 border-[#ff28ff] bg-white" />
        <div className="absolute left-1.5 top-1 flex items-center gap-2 text-[21px] leading-6">
          <svg width="16" height="8" viewBox="0 0 16 8" aria-hidden="true"><path d="M0 0h16L8 8z" fill="#000" /></svg>
          AUDJPY,H4
        </div>
        <button type="button" className="absolute left-[70px] top-[70px] h-11 w-40 rounded-xs border-2 border-black bg-[#696969] font-['Liberation_Sans',sans-serif] text-2xl text-[#28ff28]">C12-on</button>
        <div className="absolute left-[1643px] top-[394px] h-[22px] w-[134px] whitespace-nowrap bg-[#b0e0e6] text-lg leading-[22px]">5 / 501 / 91.798</div>
        <div className="absolute left-[1824px] top-[339px] font-['Liberation_Sans',sans-serif] text-[22px] leading-8 text-[#808080]">1.6</div>
        <div className="absolute left-[1932px] top-[339px] whitespace-nowrap font-['Liberation_Sans',sans-serif] text-[26px] leading-8">&lt; 2:13:32 (1.6)</div>
        <div className="absolute bottom-[22px] right-[20px] text-[21px] font-bold leading-6">Pips 0.0</div>
      </div>
      <div className="relative w-[85px] shrink-0 text-lg">
        <div className="absolute inset-x-0 -bottom-1 top-4 flex flex-col justify-between">
          {PRICES.map((p) => (
            <div key={p} className="flex h-5 items-center gap-1.5 leading-5"><span className="h-0.5 w-1 bg-black" />{p}</div>
          ))}
        </div>
        <div className="absolute left-0 top-[328px] h-[156px] w-0.5 bg-black" />
        <PriceTag top="top-9" tone="bg-[#ff28ff] text-[#b0e0e6]">92.804</PriceTag>
        <PriceTag top="top-[210px]" tone="bg-black text-white">92.299</PriceTag>
        <PriceTag top="top-[346px]" tone="bg-black text-white">91.908</PriceTag>
        <PriceTag top="top-[457px]" tone="bg-[#ff28ff] text-[#b0e0e6]">91.580</PriceTag>
      </div>
    </div>
  );
}

const RSI_LABELS: [string, string][] = [["80.9521", "top-[5px]"], ["70", "top-[19px]"], ["60", "top-[41px]"], ["50", "top-[63px]"], ["40", "top-[87px]"], ["30", "top-[109px]"], ["24.3298", "top-[110px]"]];

function RsiPanel() {
  return (
    <div className="flex h-[134px] shrink-0">
      <div className="relative min-w-0 flex-1 overflow-hidden border-2 border-black">
        <Plot top={1216}>
          <Runs s={SIG} r={SIG_UP} c="#0820ff" w={4} />
          <Runs s={SIG} r={SIG_DOWN} c="#ff1018" w={4} />
          <Runs s={RSI} r={RSI_UP} c="#0820ff" w={4} />
          <Runs s={RSI} r={RSI_DOWN} c="#ff1018" w={4} />
          <path d="M74 1281H105M589 1289H618M1258 1285L1290 1295" stroke="#000" strokeWidth="2" />
          <path d="M12 1243H4000M12 1265H4000M12 1287H4000M12 1311H4000M12 1333H4000" stroke="#000" strokeWidth="2" strokeDasharray="6 6" />
          <path d="M811 1200V1400" stroke="#ff1818" strokeWidth="2" />
        </Plot>
        <div className="absolute left-[7px] top-1.5 whitespace-nowrap text-lg leading-6">rsi div1: rsi Ma (8.00) 51.4862 51.4862 51.4862 60.6572 60.6572 62.6522</div>
      </div>
      <div className="relative w-[85px] shrink-0 text-lg leading-5">
        {RSI_LABELS.map(([t, pos]) => <div key={t} className={"absolute left-1 " + pos}>{t}</div>)}
      </div>
    </div>
  );
}

function PressurePanel() {
  return (
    <div className="flex h-[106px] shrink-0">
      <div className="relative min-w-0 flex-1 overflow-hidden border-2 border-black">
        <Plot top={1366}>
          <Fill a={2} b={5} c="#0a640a" />
          <Fill a={6} b={21} c="#800008" />
          <Fill a={23} b={33} c="#800008" />
          <Fill a={40} b={44} c="#800008" />
          <Fill a={45} b={53} c="#0a640a" />
          <path d="M406 1408L424 1426M466 1404L488 1422M558 1390L584 1416M1362 1430L1386 1448" stroke="#d8e8e8" strokeWidth="1" />
          <path d="M1582 1386L1610 1452M1619 1400L1642 1436" stroke="#d8e8e8" strokeWidth="2" strokeDasharray="2 6" />
          <Line s={BUYP} c="#0820ff" w={6} />
          <Runs s={BUYP} r={BUYP_UP} c="#108014" w={6} />
          <Line s={SELLP} c="#ffa028" w={6} />
          <Runs s={SELLP} r={SELLP_UP} c="#ff1018" w={6} />
          <path d="M811 1200V1500" stroke="#ff1818" strokeWidth="2" />
        </Plot>
        <div className="absolute left-[7px] top-1.5 whitespace-nowrap text-lg leading-6">bsp o1 H4 Buy press of EMA Sell press of EMA (35 35) 0.1116 0.1116 0.0788 0.0788</div>
      </div>
      <div className="flex w-[85px] shrink-0 flex-col justify-between pb-1 pl-1.5 pt-1.5 text-lg leading-5">
        <span>0.1449</span>
        <span>0.0621</span>
      </div>
    </div>
  );
}

function TimeAxis() {
  return (
    <div className="relative h-10 shrink-0 text-lg leading-6">
      <div className="flex">
        {TIMES.map((t, i) => (
          <div key={i} className="w-32 shrink-0 whitespace-nowrap">
            <div className="ml-0.5 h-1.5 w-0.5 bg-black" />
            <div>{t}</div>
          </div>
        ))}
      </div>
      <div className="absolute left-[725px] top-1.5 h-[22px] w-[155px] bg-[#ff1018] text-center leading-[22px] text-[#e8e8f0]">2023.02.07 18:17</div>
      <div className="absolute left-[1421px] top-1.5 h-[22px] w-[145px] bg-black text-center leading-[22px] text-white">2023.02.13 8:00</div>
    </div>
  );
}

export default function App() {
  return (
    <div className={`flex h-screen min-h-[900px] w-full flex-col overflow-hidden bg-[#e3e3e3] text-black ${CHART_FONT}`}>
      <MenuBar />
      <Toolbar />
      <main className="flex min-h-0 flex-1 flex-col border-l-2 border-t-2 border-[#808080]">
        <div className="flex min-h-0 flex-1 flex-col border-l-2 border-t-2 border-[#404040] bg-[#b0e0e6] pl-1 pt-1">
          <div className="relative flex min-h-0 flex-1 flex-col gap-0.5">
            <MainPanel />
            <div className="mr-[85px] h-5 shrink-0 border-2 border-black" />
            <RsiPanel />
            <div className="mr-[85px] h-3 shrink-0 border-2 border-black" />
            <PressurePanel />
            <div className="absolute inset-y-0 left-[1492px] w-0.5 bg-black" />
          </div>
          <TimeAxis />
        </div>
      </main>
      <div className="h-1.5 shrink-0 border-b-2 border-black bg-white" />
      <div className="flex h-[38px] shrink-0 items-start pl-2.5 text-[21px]" role="tablist">
        {TABS.map(([t, w], i) =>
          i === 1 ? (
            <button type="button" role="tab" aria-selected="true" key={i} className={`-mt-0.5 h-[38px] border-2 border-t-0 border-black bg-white pr-2 shadow-[1px_2px_0_#a0a0a0] ${w}`}>{t}</button>
          ) : (
            <button type="button" role="tab" aria-selected="false" key={i} className={`flex h-[34px] items-center justify-center text-[#404040] ${w}`}>
              <span className="flex-1 pr-2">{t}</span>
              {i > 1 && <span className="h-7 w-0.5 bg-[#404040]" />}
            </button>
          )
        )}
        <div className="ml-auto flex h-8 items-center gap-[34px] pr-5 text-[#909090]">
          <svg width="6" height="12" viewBox="0 0 6 12" aria-hidden="true"><path d="M6 0v12L0 6z" fill="currentColor" /></svg>
          <svg width="6" height="12" viewBox="0 0 6 12" aria-hidden="true"><path d="M0 0v12l6-6z" fill="currentColor" /></svg>
        </div>
      </div>
      <footer className="flex h-[46px] shrink-0 items-center border-t-2 border-white text-[22px]">
        <div className="flex-1 pl-0.5 pt-1">For Help, press F1</div>
        {CELLS.map(([t, w]) => (
          <div key={t} className={`flex h-9 shrink-0 items-center whitespace-nowrap border-l-2 border-[#808080] ${w}`}>
            <div className="flex h-full items-center border-l-2 border-white pl-1.5 pt-1">{t}</div>
          </div>
        ))}
        <div className="flex h-9 w-[277px] shrink-0 border-l-2 border-[#808080]">
          <div className="flex w-full items-center gap-1.5 border-l-2 border-white pl-2">
            <svg width="46" height="26" viewBox="0 0 46 26" shapeRendering="crispEdges" aria-hidden="true">
              {[0, 1, 2, 3, 4, 5, 6, 7].map((k) => (
                <g key={k}>
                  <rect x={k * 6} y="0" width="4" height={16 - k * 2} fill="#5c7412" />
                  <rect x={k * 6} y={20 - k * 2} width="4" height={6 + k * 2} fill="#0a3c5c" />
                </g>
              ))}
            </svg>
            <span className="pt-1 text-[21px]">60545/65 kb</span>
            <svg className="ml-auto self-end" width="30" height="30" viewBox="0 0 30 30" aria-hidden="true"><path d="M0 30L30 0M8 30L30 8M16 30L30 16M24 30l6-6" stroke="#808080" strokeWidth="3" /><path d="M4 30L30 4M12 30l18-18M20 30l10-10" stroke="#fff" strokeWidth="2" /></svg>
          </div>
        </div>
      </footer>
    </div>
  );
}
